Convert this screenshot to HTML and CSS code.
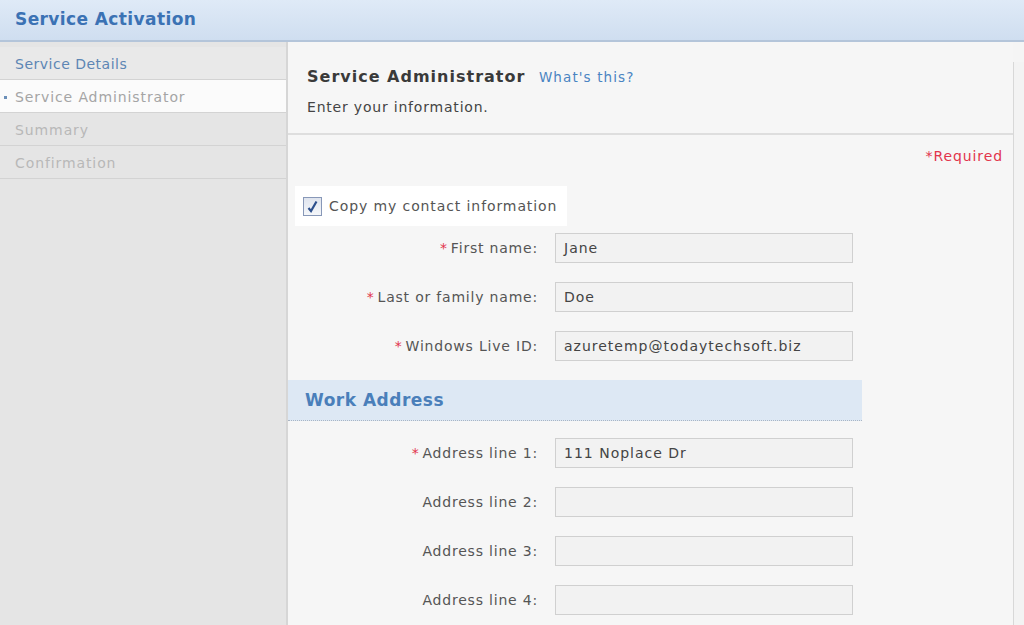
FILE: index.html
```html
<!DOCTYPE html>
<html lang="en">
<head>
    <meta charset="UTF-8">
    <title>Service Activation</title>
    <link rel="stylesheet" href="styles.css">
</head>
<body>
    <div class="topBar">
        <h1 class="title">Service Activation</h1>
    </div>
    <div class="wrap">
        <ul class="steps">
            <li class="done">Service Details</li>
            <li class="cur">Service Administrator</li>
            <li>Summary</li>
            <li>Confirmation</li>
        </ul>
        <div class="main">
            <div class="head">
                <h2>Service Administrator <a href="#">What's this?</a></h2>
                <p>Enter your information.</p>
            </div>
            <div class="req">*Required</div>
            <div class="copy">
                <span class="chk">
                    <svg width="13" height="13" viewBox="0 0 13 13"><path d="M2.5 8 L5 11 L10.5 1.5" fill="none" stroke="#2c4f8c" stroke-width="2.2"/></svg>
                </span>
                Copy my contact information
            </div>
            <div class="form">
                <label><i>*</i>First name:</label>
                <div class="box">Jane</div>
                <label><i>*</i>Last or family name:</label>
                <div class="box">Doe</div>
                <label><i>*</i>Windows Live ID:</label>
                <div class="box">azuretemp@todaytechsoft.biz</div>
            </div>
            <h3 class="sect">Work Address</h3>
            <div class="form">
                <label><i>*</i>Address line 1:</label>
                <div class="box">111 Noplace Dr</div>
                <label>Address line 2:</label>
                <div class="box"></div>
                <label>Address line 3:</label>
                <div class="box"></div>
                <label>Address line 4:</label>
                <div class="box"></div>
            </div>
        </div>
        <div class="scroll"></div>
    </div>
</body>
</html>
```

FILE: styles.css
```css
body,
h1,h2,h3,p{
    margin: 0;
}
ul{
    margin: 0;
    padding: 0;
    list-style: none;
}
body{
    width: 1024px;
    height: 625px;
    overflow: hidden;
    font-family: "DejaVu Sans", Verdana, sans-serif;
    font-size: 14px;
    color: #444;
    background-color: #f5f5f5;
}
.topBar{
    height: 40px;
    background: linear-gradient(#dfeaf7, #cfdef0);
    border-bottom: 2px solid #b4c5da;
    display: flex;
    align-items: center;
    padding-left: 15px;
}
.title{
    font-size: 17px;
    color: #3b72b4;
    letter-spacing: 0.4px;
    margin-top: -3px;
}
.wrap{
    display: flex;
    height: 583px;
}
.steps{
    width: 286px;
    background-color: #e5e5e5;
    border-right: 2px solid #d6d6d6;
    padding-top: 5px;
}
.steps li{
    height: 32px;
    line-height: 34px;
    padding-left: 15px;
    font-size: 14px;
    color: #b8b8b8;
    border-bottom: 1px solid #d3d3d3;
    letter-spacing: 0.9px;
}
.steps .done{
    color: #5d86b4;
    background-color: #e9e9e9;
    letter-spacing: 0.5px;
}
.steps .cur{
    color: #a5a5a5;
    background-color: #fbfbfb;
    position: relative;
}
.steps .cur:before{
    content: "";
    position: absolute;
    left: 4px;
    top: 16px;
    width: 3px;
    height: 3px;
    background-color: #6b8fb8;
}
.main{
    flex: 1;
    background-color: #f6f6f6;
}
.head{
    height: 93px;
    border-bottom: 2px solid #dedede;
    padding: 25px 0 0 19px;
    box-sizing: border-box;
}
.head h2{
    font-size: 16px;
    color: #3a3a3a;
    letter-spacing: 1px;
}
.head h2 a{
    font-size: 13.5px;
    font-weight: normal;
    color: #4a84c2;
    text-decoration: none;
    margin-left: 7px;
    letter-spacing: 1.1px;
}
.head p{
    margin-top: 13px;
    font-size: 14px;
    color: #444;
    letter-spacing: 0.8px;
}
.req{
    text-align: right;
    color: #e2344c;
    font-size: 14px;
    padding: 13px 10px 0 0;
    height: 40px;
    box-sizing: border-box;
    letter-spacing: 0.9px;
}
.copy{
    display: inline-flex;
    align-items: center;
    gap: 7px;
    margin: 11px 0 0 7px;
    height: 40px;
    padding: 0 10px 0 8px;
    background-color: #fff;
    color: #555;
    font-size: 14px;
    letter-spacing: 0.9px;
}
.chk{
    width: 17px;
    height: 17px;
    border: 1px solid #8898b8;
    background: linear-gradient(#dfe4ee, #f5f7fa);
    display: flex;
    align-items: center;
    justify-content: center;
}
.form{
    display: grid;
    grid-template-columns: 250px 298px;
    column-gap: 17px;
    row-gap: 19px;
    align-items: center;
    margin-top: 7px;
}
.form label{
    text-align: right;
    font-size: 14px;
    color: #555;
    letter-spacing: 0.8px;
}
.form label i{
    font-style: normal;
    color: #e2344c;
    margin-right: 3px;
}
.box{
    height: 28px;
    line-height: 28px;
    border: 1px solid #d0d0d0;
    background-color: #f2f2f2;
    padding-left: 8px;
    font-size: 14px;
    color: #444;
    letter-spacing: 1px;
}
.sect{
    width: 557px;
    height: 40px;
    line-height: 40px;
    margin-top: 19px;
    margin-bottom: 17px;
    padding-left: 17px;
    background-color: #dde8f4;
    border-bottom: 1px dotted #a9b5c4;
    color: #4a7fba;
    font-size: 17px;
    letter-spacing: 0.5px;
}
.scroll{
    width: 10px;
    background-color: #f3f3f3;
    border-left: 1px solid #d8d8d8;
    margin-top: 20px;
}
```
